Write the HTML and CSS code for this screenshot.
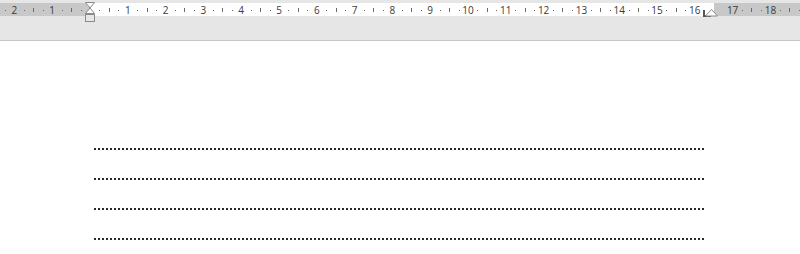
FILE: index.html
```html
<!DOCTYPE html>
<html>
<head>
<meta charset="utf-8">
<link rel="stylesheet" href="styles.css">
</head>
<body>
<div class="ruler-area">
  <svg class="ruler" width="800" height="24" viewBox="0 0 800 24" xmlns="http://www.w3.org/2000/svg">
    <rect x="0" y="3" width="90" height="13" fill="#c8c8c8"/>
    <rect x="90" y="3" width="624" height="13" fill="#ffffff"/>
    <rect x="714" y="3" width="86" height="13" fill="#c8c8c8"/>
    <g fill="#6a6a6a" shape-rendering="crispEdges">
      <rect x="5" y="10" width="1" height="1"/>
      <rect x="24" y="10" width="1" height="1"/><rect x="33" y="8" width="1" height="4"/><rect x="43" y="10" width="1" height="1"/>
      <rect x="62" y="10" width="1" height="1"/><rect x="71" y="8" width="1" height="4"/><rect x="81" y="10" width="1" height="1"/>
      <rect x="99" y="10" width="1" height="1"/><rect x="109" y="8" width="1" height="4"/><rect x="118" y="10" width="1" height="1"/>
      <rect x="137" y="10" width="1" height="1"/><rect x="147" y="8" width="1" height="4"/><rect x="156" y="10" width="1" height="1"/>
      <rect x="175" y="10" width="1" height="1"/><rect x="184" y="8" width="1" height="4"/><rect x="194" y="10" width="1" height="1"/>
      <rect x="213" y="10" width="1" height="1"/><rect x="222" y="8" width="1" height="4"/><rect x="232" y="10" width="1" height="1"/>
      <rect x="251" y="10" width="1" height="1"/><rect x="260" y="8" width="1" height="4"/><rect x="270" y="10" width="1" height="1"/>
      <rect x="288" y="10" width="1" height="1"/><rect x="298" y="8" width="1" height="4"/><rect x="307" y="10" width="1" height="1"/>
      <rect x="326" y="10" width="1" height="1"/><rect x="336" y="8" width="1" height="4"/><rect x="345" y="10" width="1" height="1"/>
      <rect x="364" y="10" width="1" height="1"/><rect x="373" y="8" width="1" height="4"/><rect x="383" y="10" width="1" height="1"/>
      <rect x="402" y="10" width="1" height="1"/><rect x="411" y="8" width="1" height="4"/><rect x="421" y="10" width="1" height="1"/>
      <rect x="440" y="10" width="1" height="1"/><rect x="449" y="8" width="1" height="4"/><rect x="459" y="10" width="1" height="1"/>
      <rect x="477" y="10" width="1" height="1"/><rect x="487" y="8" width="1" height="4"/><rect x="496" y="10" width="1" height="1"/>
      <rect x="515" y="10" width="1" height="1"/><rect x="525" y="8" width="1" height="4"/><rect x="534" y="10" width="1" height="1"/>
      <rect x="553" y="10" width="1" height="1"/><rect x="562" y="8" width="1" height="4"/><rect x="572" y="10" width="1" height="1"/>
      <rect x="591" y="10" width="1" height="1"/><rect x="600" y="8" width="1" height="4"/><rect x="610" y="10" width="1" height="1"/>
      <rect x="629" y="10" width="1" height="1"/><rect x="638" y="8" width="1" height="4"/><rect x="648" y="10" width="1" height="1"/>
      <rect x="666" y="10" width="1" height="1"/><rect x="676" y="8" width="1" height="4"/><rect x="685" y="10" width="1" height="1"/>
      <rect x="742" y="10" width="1" height="1"/><rect x="751" y="8" width="1" height="4"/><rect x="761" y="10" width="1" height="1"/>
      <rect x="780" y="10" width="1" height="1"/><rect x="789" y="8" width="1" height="4"/><rect x="799" y="10" width="1" height="1"/>
    </g>
    <g class="nums" text-anchor="middle">
      <text x="14.4" y="13.5">2</text>
      <text x="52.2" y="13.5">1</text>
      <text x="127.8" y="13.5">1</text>
      <text x="165.6" y="13.5">2</text>
      <text x="203.4" y="13.5">3</text>
      <text x="241.2" y="13.5">4</text>
      <text x="279" y="13.5">5</text>
      <text x="316.8" y="13.5">6</text>
      <text x="354.6" y="13.5">7</text>
      <text x="392.4" y="13.5">8</text>
      <text x="430.2" y="13.5">9</text>
      <text x="468" y="13.5">10</text>
      <text x="505.8" y="13.5">11</text>
      <text x="543.6" y="13.5">12</text>
      <text x="581.4" y="13.5">13</text>
      <text x="619.2" y="13.5">14</text>
      <text x="657" y="13.5">15</text>
      <text x="694.8" y="13.5">16</text>
      <text x="732.6" y="13.5">17</text>
      <text x="770.4" y="13.5">18</text>
    </g>
    <!-- left indent markers -->
    <path d="M85.5 2.5 H94.5 L90 8 Z" fill="#ffffff" stroke="#8a8a8a" stroke-width="1"/>
    <path d="M90 8 L94.5 13.5 H85.5 Z" fill="#ffffff" stroke="#8a8a8a" stroke-width="1"/>
    <rect x="85.5" y="14.5" width="9" height="7" fill="#e6e6e6" stroke="#8a8a8a" stroke-width="1"/>
    <!-- right markers -->
    <path d="M704 10 V16 H711" fill="none" stroke="#555555" stroke-width="2"/>
    <path d="M711.5 9.5 L717.5 16 H705.5 Z" fill="#ffffff" stroke="#8a8a8a" stroke-width="1"/>
  </svg>
</div>
<div class="page">
  <div class="leader"></div>
  <div class="leader"></div>
  <div class="leader"></div>
  <div class="leader"></div>
</div>
</body>
</html>
```

FILE: styles.css
```css
html, body {
  margin: 0;
  padding: 0;
  background: #ffffff;
}

body {
  width: 800px;
  height: 254px;
  overflow: hidden;
}

.ruler-area {
  height: 40px;
  background: #e6e6e6;
  border-bottom: 1px solid #c6c6c6;
}

.ruler {
  display: block;
}

.nums text {
  font-family: "Open Sans", "Noto Sans", sans-serif;
  font-size: 10px;
  fill: #3a3a3a;
}

.page {
  display: flex;
  flex-direction: column;
  gap: 28px;
  padding: 107px 0 0 94px;
}

.leader {
  width: 610px;
  height: 2px;
  background: repeating-linear-gradient(to right, #2a2a2a 0 2px, transparent 2px 4px);
}
```
